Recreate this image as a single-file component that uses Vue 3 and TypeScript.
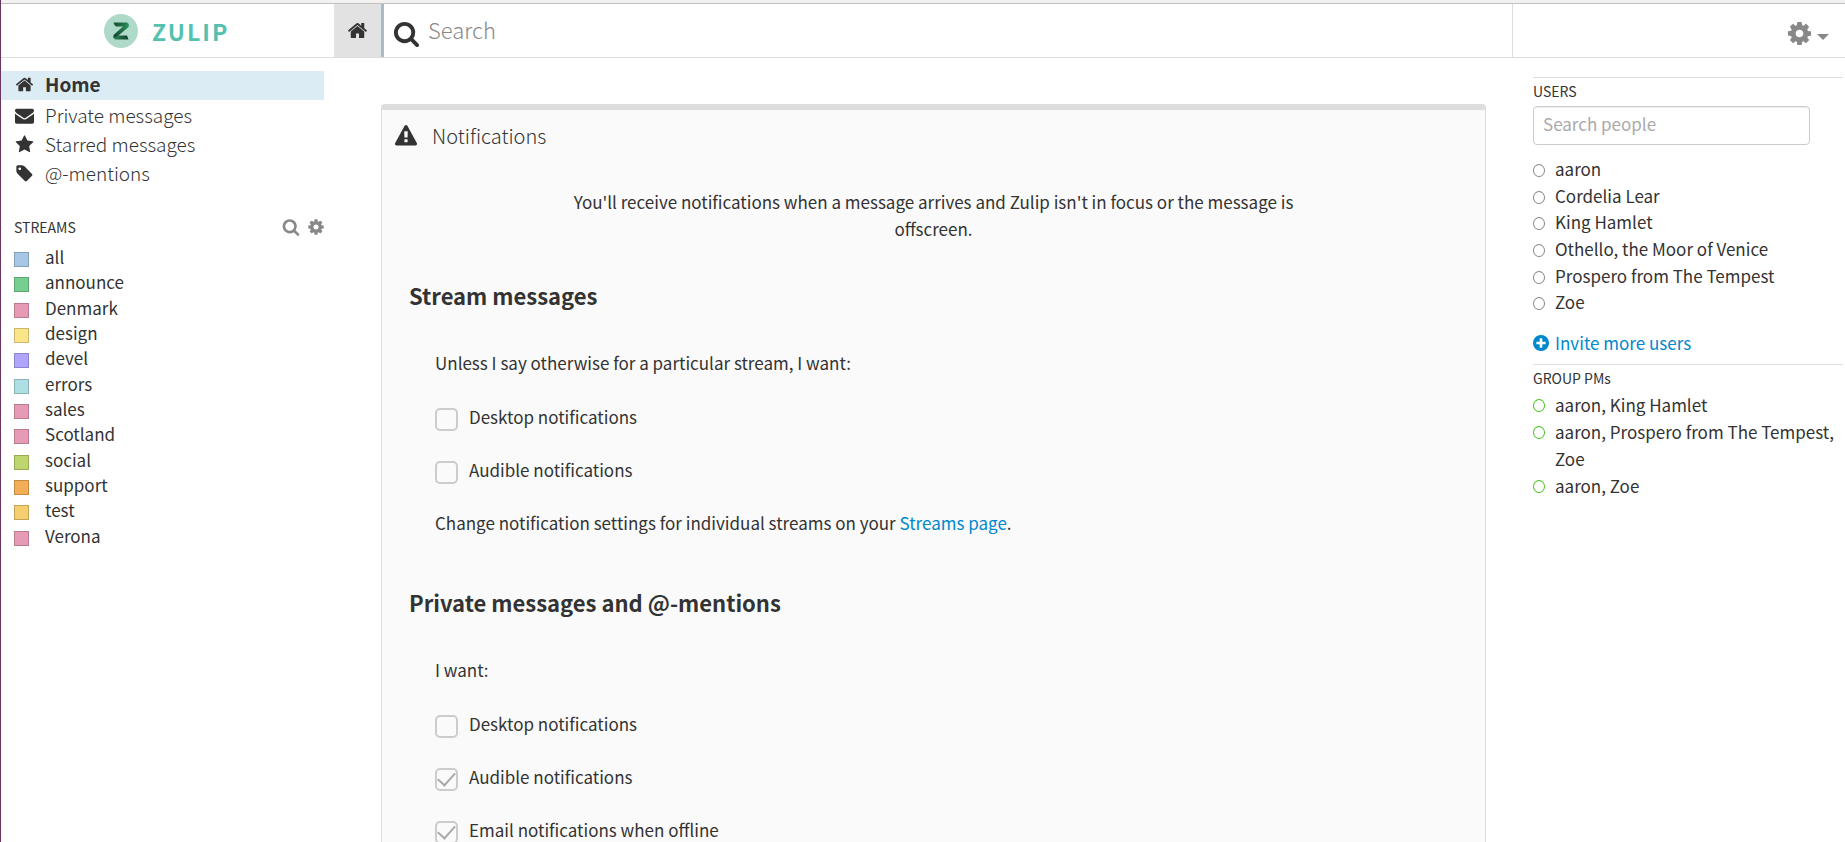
<script setup lang="ts">
import { ref } from 'vue'

type IconName = 'home' | 'envelope' | 'star' | 'tag' | 'search' | 'cog' | 'warning' | 'plus'

const icons: Record<IconName, string> = {
  home: 'M1472 992v480q0 26-19 45t-45 19h-384v-384h-256v384h-384q-26 0-45-19t-19-45v-480q0-1 .5-3t.5-3l575-474 575 474q1 2 1 6zm223-69l-62 74q-8 9-21 11h-3q-13 0-21-7l-692-577-692 577q-12 8-24 7-13-2-21-11l-62-74q-8-10-7-23.5t11-21.5l719-599q32-26 76-26t76 26l244 204v-195q0-14 9-23t23-9h192q14 0 23 9t9 23v408l219 182q10 8 11 21.5t-7 23.5z',
  envelope: 'M1792 710v794q0 66-47 113t-113 47h-1472q-66 0-113-47t-47-113v-794q44 49 101 87 362 246 497 345 57 42 92.5 65.5t94.5 48 110 24.5h2q51 0 110-24.5t94.5-48 92.5-65.5q170-123 498-345 57-39 100-87zm0-294q0 79-49 151t-122 123q-376 261-468 325-10 7-42.5 31t-54 38.5-52 32.5-57.5 27-50 9h-2q-23 0-50-9t-57.5-27-52-32.5-54-38.5-42.5-31q-91-64-262-182.5t-205-142.5q-62-42-117-115.5t-55-136.5q0-78 41.5-130t118.5-52h1472q65 0 112.5 47t47.5 113z',
  star: 'M1728 647q0 22-26 48l-363 354 86 500q1 7 1 20 0 21-10.5 35.5t-30.5 14.5q-19 0-40-12l-449-236-449 236q-22 12-40 12-21 0-31.5-14.5t-10.5-35.5q0-6 2-20l86-500-364-354q-25-27-25-48 0-37 56-46l502-73 225-455q19-41 49-41t49 41l225 455 502 73q56 9 56 46z',
  tag: 'M576 448q0-53-37.5-90.5t-90.5-37.5-90.5 37.5-37.5 90.5 37.5 90.5 90.5 37.5 90.5-37.5 37.5-90.5zm1067 576q0 53-37 90l-491 492q-39 37-91 37-53 0-90-37l-715-716q-38-37-64.5-101t-26.5-117v-416q0-52 38-90t90-38h416q53 0 117 26.5t102 64.5l715 714q37 39 37 91z',
  search: 'M1216 832q0-185-131.5-316.5t-316.5-131.5-316.5 131.5-131.5 316.5 131.5 316.5 316.5 131.5 316.5-131.5 131.5-316.5zm512 832q0 52-38 90t-90 38q-54 0-90-38l-343-342q-179 124-399 124-143 0-273.5-55.5t-225-150-150-225-55.5-273.5 55.5-273.5 150-225 225-150 273.5-55.5 273.5 55.5 225 150 150 225 55.5 273.5q0 220-124 399l343 343q37 37 37 90z',
  cog: 'M1152 896q0-106-75-181t-181-75-181 75-75 181 75 181 181 75 181-75 75-181zm512-109v222q0 12-8 23t-20 13l-185 28q-19 54-39 91 35 50 107 138 10 12 10 25t-9 23q-27 37-99 108t-94 71q-12 0-26-9l-138-108q-44 23-91 38-16 136-29 186-7 28-36 28h-222q-14 0-24.5-8.5t-11.5-21.5l-28-184q-49-16-90-37l-141 107q-10 9-25 9-14 0-25-11-126-114-165-168-7-10-7-23 0-12 8-23 15-21 51-66.5t54-70.5q-27-50-41-99l-183-27q-13-2-21-12.5t-8-23.5v-222q0-12 8-23t19-13l186-28q14-46 39-92-40-57-107-138-10-12-10-24 0-10 9-23 26-36 98.5-107.5t94.5-71.5q13 0 26 10l138 107q44-23 91-38 16-136 29-186 7-28 36-28h222q14 0 24.5 8.5t11.5 21.5l28 184q49 16 90 37l142-107q9-9 24-9 13 0 25 10 129 119 165 170 7 8 7 22 0 12-8 23-15 21-51 66.5t-54 70.5q26 50 41 98l183 28q13 2 21 12.5t8 23.5z',
  warning: 'M1024 1375v-190q0-14-9.5-23.5t-22.5-9.5h-192q-13 0-22.5 9.5t-9.5 23.5v190q0 14 9.5 23.5t22.5 9.5h192q13 0 22.5-9.5t9.5-23.5zm-2-374l18-459q0-12-10-19-13-11-24-11h-220q-11 0-24 11-10 7-10 21l17 457q0 10 10 16.5t24 6.5h185q14 0 23.5-6.5t10.5-16.5zm-14-934l768 1408q35 63-2 126-17 29-46.5 46t-63.5 17h-1536q-34 0-63.5-17t-46.5-46q-37-63-2-126l768-1408q17-31 47-49t65-18 65 18 47 49z',
  plus: 'M1344 960v-128q0-26-19-45t-45-19h-256v-256q0-26-19-45t-45-19h-128q-26 0-45 19t-19 45v256h-256q-26 0-45 19t-19 45v128q0 26 19 45t45 19h256v256q0 26 19 45t45 19h128q26 0 45-19t19-45v-256h256q26 0 45-19t19-45zm320-64q0 209-103 385.5t-279.5 279.5-385.5 103-385.5-103-279.5-279.5-103-385.5 103-385.5 279.5-279.5 385.5-103 385.5 103 279.5 279.5 103 385.5z',
}

const nav: { label: string; icon: IconName; active?: boolean }[] = [
  { label: 'Home', icon: 'home', active: true },
  { label: 'Private messages', icon: 'envelope' },
  { label: 'Starred messages', icon: 'star' },
  { label: '@-mentions', icon: 'tag' },
]

const streams = [
  { name: 'all', color: '#a6c7e5' },
  { name: 'announce', color: '#76ce90' },
  { name: 'Denmark', color: '#e79ab5' },
  { name: 'design', color: '#fae589' },
  { name: 'devel', color: '#b0a5fd' },
  { name: 'errors', color: '#addfe5' },
  { name: 'sales', color: '#e79ab5' },
  { name: 'Scotland', color: '#e79ab5' },
  { name: 'social', color: '#bfd56f' },
  { name: 'support', color: '#f4ae55' },
  { name: 'test', color: '#f5ce6e' },
  { name: 'Verona', color: '#e79ab5' },
]

const users = ['aaron', 'Cordelia Lear', 'King Hamlet', 'Othello, the Moor of Venice', 'Prospero from The Tempest', 'Zoe']
const groups = ['aaron, King Hamlet', 'aaron, Prospero from The Tempest, Zoe', 'aaron, Zoe']

const streamOptions = ref([
  { id: 'stream-desktop', label: 'Desktop notifications', on: false },
  { id: 'stream-audible', label: 'Audible notifications', on: false },
])
const privateOptions = ref([
  { id: 'pm-desktop', label: 'Desktop notifications', on: false },
  { id: 'pm-audible', label: 'Audible notifications', on: true },
  { id: 'pm-email', label: 'Email notifications when offline', on: true },
])

const query = ref('')
const people = ref('')
</script>

<template>
  <div class="app">
    <header class="topbar">
      <a class="brand" href="#">
        <svg class="logo" viewBox="0 0 34 34" aria-hidden="true">
          <defs>
            <linearGradient id="fold" x1="0" y1="1" x2="1" y2="0">
              <stop offset="0" stop-color="#123f28" />
              <stop offset="1" stop-color="#2f9560" />
            </linearGradient>
            <linearGradient id="top" x1="0" x2="1">
              <stop offset="0" stop-color="#164a2e" />
              <stop offset="1" stop-color="#2a8a57" />
            </linearGradient>
            <linearGradient id="foot" x1="0" x2="1">
              <stop offset="0" stop-color="#2a8a57" />
              <stop offset="1" stop-color="#123f28" />
            </linearGradient>
          </defs>
          <circle cx="17" cy="17" r="17" fill="#afdaca" />
          <path d="M9.500 8.500H23L24.500 10V12.500H12L10.500 11Z" fill="url(#top)" />
          <path d="M10 21.500H23L24.500 25.500H11L9.500 24Z" fill="url(#foot)" />
          <path d="M24.500 9.500V13L14.500 21.500L9.500 24V21L19.500 12Z" fill="url(#fold)" />
        </svg>
        <span class="wordmark">ZULIP</span>
      </a>
      <a class="tab" href="#" aria-label="Home">
        <svg viewBox="0 0 1792 1792"><path :d="icons.home" /></svg>
      </a>
      <div class="searchbar">
        <label for="query" aria-label="Search">
          <svg viewBox="0 0 1792 1792"><path :d="icons.search" /></svg>
        </label>
        <input id="query" v-model="query" type="text" placeholder="Search" />
      </div>
      <div class="tools">
        <button class="menu" type="button" aria-label="Settings menu">
          <svg class="gear" viewBox="0 0 1792 1792"><path :d="icons.cog" /></svg>
          <span class="caret"></span>
        </button>
      </div>
    </header>

    <div class="body">
      <aside class="left">
        <nav>
          <a v-for="item in nav" :key="item.label" href="#" class="nav-item" :class="{ active: item.active }">
            <svg viewBox="0 0 1792 1792"><path :d="icons[item.icon]" /></svg>
            <span>{{ item.label }}</span>
          </a>
        </nav>
        <div class="streams-head">
          <h2 class="caption">STREAMS</h2>
          <button type="button" aria-label="Filter streams">
            <svg viewBox="0 0 1792 1792"><path :d="icons.search" /></svg>
          </button>
          <button type="button" aria-label="Stream settings">
            <svg viewBox="0 0 1792 1792"><path :d="icons.cog" /></svg>
          </button>
        </div>
        <ul class="streams">
          <li v-for="stream in streams" :key="stream.name">
            <span class="swatch" :style="{ backgroundColor: stream.color }"></span>
            <a href="#">{{ stream.name }}</a>
          </li>
        </ul>
      </aside>

      <main class="panel">
        <div class="panel-head">
          <svg viewBox="0 0 1792 1792"><path :d="icons.warning" /></svg>
          <h1>Notifications</h1>
        </div>
        <p class="intro">
          You'll receive notifications when a message arrives and Zulip isn't in focus or the message is offscreen.
        </p>

        <h2 class="section">Stream messages</h2>
        <div class="options">
          <p>Unless I say otherwise for a particular stream, I want:</p>
          <div v-for="option in streamOptions" :key="option.id" class="option">
            <input :id="option.id" v-model="option.on" type="checkbox" />
            <label :for="option.id">{{ option.label }}</label>
          </div>
          <p>Change notification settings for individual streams on your <a href="#">Streams page</a>.</p>
        </div>

        <h2 class="section later">Private messages and @-mentions</h2>
        <div class="options">
          <p>I want:</p>
          <div v-for="option in privateOptions" :key="option.id" class="option">
            <input :id="option.id" v-model="option.on" type="checkbox" />
            <label :for="option.id">{{ option.label }}</label>
          </div>
        </div>
      </main>

      <aside class="right">
        <section>
          <h2 class="caption"><label for="people">USERS</label></h2>
          <input id="people" v-model="people" class="people" type="text" placeholder="Search people" />
          <ul class="users">
            <li v-for="user in users" :key="user"><span class="status"></span><a href="#">{{ user }}</a></li>
          </ul>
          <a class="invite" href="#">
            <svg viewBox="128 128 1536 1536"><path :d="icons.plus" /></svg>
            <span>Invite more users</span>
          </a>
        </section>
        <section>
          <h2 class="caption">GROUP PMs</h2>
          <ul class="groups">
            <li v-for="group in groups" :key="group"><span class="status online"></span><a href="#">{{ group }}</a></li>
          </ul>
        </section>
      </aside>
    </div>
  </div>
</template>

<style>
body {
  margin: 0;
  background: #fff;
}
</style>

<style scoped>
* {
  box-sizing: border-box;
}
.app {
  display: flex;
  flex-direction: column;
  height: 100vh;
  overflow: hidden;
  border-left: 1px solid #6a3560;
  color: #333;
  font: 17px/27px "Noto Sans CJK SC", "Open Sans", sans-serif;
}
h1, h2, p, ul {
  margin: 0;
  padding: 0;
  list-style: none;
}
a {
  color: inherit;
  text-decoration: none;
}
button {
  display: flex;
  padding: 0;
  border: 0;
  background: none;
  color: #888;
}
input {
  font-family: inherit;
  color: inherit;
  outline: none;
}
svg {
  display: block;
  flex: none;
  fill: currentColor;
}

.topbar {
  display: grid;
  grid-template-columns: 333px 50px 1fr 333px;
  flex: none;
  height: 58px;
  border-top: 3px solid #f2f1f0;
  border-bottom: 1px solid #ddd;
  box-shadow: inset 0 1px #c4c2c0;
}
.brand {
  display: flex;
  align-items: center;
  padding: 2px 0 0 103px;
  gap: 14px;
}
.logo {
  width: 34px;
  height: 34px;
}
.wordmark {
  color: #52c2af;
  font-size: 23px;
  font-weight: 700;
  letter-spacing: 2px;
}
.tab {
  display: flex;
  align-items: center;
  justify-content: center;
  margin-top: 1px;
  border-right: 3px solid #a9bbc7;
  background: #e2e2e2;
}
.tab svg {
  width: 21px;
  height: 21px;
}
.searchbar {
  display: flex;
  align-items: center;
  padding-left: 9px;
  gap: 8px;
}
.searchbar svg {
  width: 27px;
  height: 27px;
  margin-top: 7px;
}
.searchbar input {
  flex: 1;
  min-width: 0;
  padding: 0 0 2px;
  border: 0;
  background: none;
  font-size: 22px;
  font-weight: 300;
  line-height: 32px;
}
.searchbar input::placeholder {
  color: #888;
}
.tools {
  display: flex;
  align-items: center;
  justify-content: flex-end;
  margin-top: 1px;
  padding: 6px 16px 0 0;
  border-left: 1px solid #ddd;
}
.menu {
  align-items: center;
  gap: 4px;
}
.gear {
  width: 27px;
  height: 27px;
}
.caret {
  margin-top: 6px;
  border: 6px solid transparent;
  border-top-color: #888;
  border-bottom: 0;
}

.body {
  display: grid;
  grid-template-columns: 380px 1fr 359px;
  flex: 1;
  min-height: 0;
}
.left {
  padding: 13px 57px 0 0;
}
.nav-item {
  display: flex;
  height: 29px;
  padding-left: 14px;
  gap: 11px;
  font-size: 19px;
  font-weight: 300;
  line-height: 25px;
}
.nav-item svg {
  width: 19px;
  height: 19px;
  margin-top: 4px;
}
.nav-item.active {
  margin-bottom: 2px;
  background: #dcecf5;
  font-weight: 700;
}
.caption {
  font-size: 14px;
  font-weight: 400;
  line-height: 20px;
}
.streams-head {
  display: flex;
  align-items: center;
  margin: 28px -1px 7px 0;
  padding-left: 13px;
  gap: 7px;
}
.streams-head .caption {
  flex: 1;
}
.streams-head svg {
  width: 18px;
  height: 18px;
}
.streams {
  display: grid;
  grid-auto-rows: 1fr;
  min-height: 304px;
  padding-left: 13px;
  line-height: 25px;
}
.streams li {
  display: flex;
  gap: 16px;
}
.swatch {
  width: 15px;
  height: 15px;
  margin-top: 8px;
  border: 1px solid rgba(0, 0, 0, 0.2);
}

.panel {
  margin-top: 46px;
  border: 1px solid #ddd;
  border-top-width: 6px;
  border-bottom: 0;
  border-radius: 4px 4px 0 0;
  background: #fafafa;
}
.panel-head {
  display: flex;
  align-items: center;
  padding: 13px 13px 0;
  gap: 15px;
}
.panel-head svg {
  width: 22px;
  height: 22px;
}
.panel-head h1 {
  font-size: 20px;
  font-weight: 300;
  line-height: 26px;
}
.intro {
  max-width: 760px;
  margin: 39px auto 0;
  text-align: center;
}
.section {
  margin: 38px 27px 0;
  font-size: 22px;
  font-weight: 700;
  line-height: 30px;
}
.section.later {
  margin-top: 51px;
}
.options {
  display: flex;
  flex-direction: column;
  padding: 39px 53px 0;
  gap: 26px;
}
.option {
  display: flex;
  gap: 11px;
}
.options p:first-child {
  margin-bottom: 1px;
}
.option input {
  appearance: none;
  flex: none;
  width: 23px;
  height: 23px;
  margin: 5px 0 -1px;
  border: 2px solid #ccc;
  border-radius: 5px;
  display: grid;
  place-items: center;
}
.option input:checked::before {
  content: "";
  width: 15px;
  height: 8px;
  margin-bottom: 5px;
  border: solid #aaa;
  border-width: 0 0 2px 2px;
  transform: rotate(-48deg);
}
.options a,
.invite {
  color: #08c;
}

.right {
  padding: 19px 2px 0 47px;
}
.right section {
  padding-top: 3px;
  border-top: 1px solid #ddd;
}
.people {
  display: block;
  width: calc(100% - 33px);
  height: 39px;
  margin-top: 5px;
  padding: 0 9px 4px;
  border: 1px solid #ccc;
  border-radius: 4px;
  box-shadow: inset 0 1px 1px rgba(0, 0, 0, 0.075);
  font-size: 17px;
}
.people::placeholder {
  color: #aaa;
}
.users {
  display: grid;
  grid-auto-rows: 1fr;
  min-height: 160px;
  margin-top: 11px;
  line-height: 26px;
}
.right li {
  display: flex;
  gap: 10px;
}
.status {
  flex: none;
  width: 12px;
  height: 13px;
  margin-top: 8px;
  border: 1px solid #888;
  border-radius: 50%;
}
.status.online {
  border-color: #44c21d;
}
.invite {
  display: flex;
  align-items: center;
  margin: 13px 0 8px;
  gap: 6px;
}
.invite svg {
  width: 16px;
  height: 16px;
}
.groups {
  margin-top: 3px;
}
</style>
